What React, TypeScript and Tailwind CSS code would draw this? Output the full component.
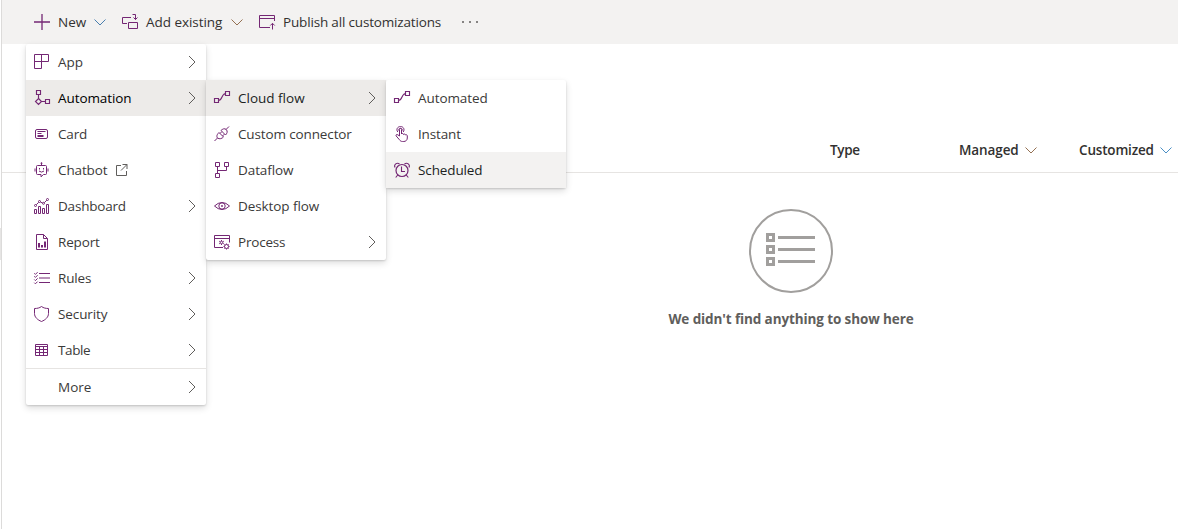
import React from 'react';

type IconName =
  | 'app' | 'automation' | 'card' | 'chatbot' | 'dashboard' | 'report' | 'rules' | 'security' | 'table'
  | 'flow' | 'connector' | 'dataflow' | 'desktop' | 'process' | 'instant' | 'clock'
  | 'plus' | 'addExisting' | 'publish';

const shapes: Record<IconName, React.ReactNode> = {
  app: <path d="M.5 14.5V.5h14v7H.5M7.5.5v14h-7" />,
  automation: <path d="M2.5.5h4v4h-4zM4.5 4.5v4M4.5 8.5l3 3-3 3-3-3zM7.5 11.5h4M11.5 9.5h4v4h-4z" strokeWidth="1.15" />,
  card: (
    <>
      <rect x="1.5" y="3.5" width="12" height="9" rx="1.5" />
      <path d="M3.5 5.500h8M3.5 7.500h4" />
      <path d="M3.5 10h6" strokeWidth="2" />
    </>
  ),
  chatbot: (
    <>
      <path d="M7.5 1v3M3.500 3.500h8a1 1 0 0 1 1 1v7a1 1 0 0 1-1 1H9.500l-2.500 2.300v-2.300H3.500a1 1 0 0 1-1-1v-7a1 1 0 0 1 1-1zM1 6.500v3M14 6.500v3" />
      <path d="M5 9q2.500 2.200 5 0M5.500 6v1.500M9.500 6v1.500" />
      <circle cx="7.500" cy="1.200" r=".6" />
    </>
  ),
  dashboard: (
    <>
      <path d="M.5 11.500h2v4h-2zM4.500 8.500h2v7h-2zM8.500 10.500h2v5h-2zM12.500 6.500h2v9h-2z" />
      <path d="M2.300 6.700l2.400-2.400M6.500 4l2 1M10.300 4.700l2.500-2.500" />
      <circle cx="1.500" cy="7.500" r="1" /><circle cx="5.500" cy="3.500" r="1" />
      <circle cx="9.500" cy="5.300" r="1" /><circle cx="13.500" cy="1.500" r="1" />
    </>
  ),
  report: (
    <>
      <path d="M9.500.5h-7v15h11v-11zM9.500.5v4h4" />
      <path d="M5 9v4.500M8 11v2.500M11 7.500v6" strokeWidth="2" />
    </>
  ),
  rules: (
    <>
      <path d="M5 3.500h11M5 8h11M5 12.500h11" strokeWidth="1.2" />
      <path d="M.3 3.300l1.100 1.100 2.200-2.200M.3 6.300l1.100 1.100 2.200-2.200M.3 9.500l1.100 1.100 2.200-2.200M.3 12.700l1.100 1.100 2.200-2.200" />
    </>
  ),
  security: <path d="M7.500.5C5.500 2 3.200 2.500.5 2.500v5c0 3.700 3.100 6.400 7 8 3.900-1.600 7-4.300 7-8v-5c-2.700 0-5-.5-7-2z" />,
  table: (
    <>
      <path d="M1.500 2.500h12v11h-12zM1.500 7.500h12M1.500 10.500h12M5.500 4.500v9M9.500 4.500v9" />
      <path d="M1.500 4.500h12" />
    </>
  ),
  flow: <path d="M.5 8.500h4v4h-4zM11.500 1.500h4v4h-4zM4.500 10.500c4 0 3-7 7-7" strokeWidth="1.15" />,
  connector: (
    <>
      <path d="M.5 15l3-3M12 3.500l3-3M3.500 12c-1.500-2 0-4 1.500-5.500l4.500 4.500C8 12.500 5.500 13.500 3.500 12zM7 4.500L11.500 9c1.500-1.500 2.500-3.500.8-5.500C10.500 2 8.500 3 7 4.500z" />
      <path d="M6 7.500l1.800-1.800M8.500 10l1.800-1.800" />
    </>
  ),
  dataflow: <path d="M1.500.5h4v4h-4zM10.500.5h4v4h-4zM1.500 11.500h4v4h-4zM3.500 4.500v7M3.500 8.500h9v-4" />,
  desktop: (
    <>
      <path d="M.5 8Q4 4.500 8 4.500T15.500 8Q12 11.500 8 11.500T.5 8z" />
      <circle cx="8" cy="8" r="3.200" /><circle cx="8" cy="8" r=".6" />
    </>
  ),
  process: (
    <>
      <path d="M9 13.500H.5v-12h15v7M.5 4.500h15" />
      <circle cx="7.500" cy="8.500" r="1.200" />
      <path d="M7.500 6v1M7.500 10v1M5.200 7.200l1 .6M8.800 9.200l1 .6M5.200 9.800l1-.6M8.800 7.800l1-.6" />
      <circle cx="12.500" cy="12.500" r="2" />
      <path d="M12.500 9.500v1M12.500 14.500v1M9.500 12.500h1M14.500 12.500h1M10.400 10.400l.7.7M13.900 13.900l.7.7M10.400 14.600l.7-.7M13.900 11.100l.7-.7" />
    </>
  ),
  instant: (
    <>
      <path d="M5.500 10V3.500c0-1.500 2-1.500 2 0V8c.3-.8 2-.7 2 .5.400-.8 2-.5 2 .5.400-.6 1.800-.3 1.800.8v2.200c0 2-1.500 3.500-3.500 3.500H8.500c-1.500 0-2.300-.7-3-1.700L2.200 10c-.7-1.200.6-2 1.600-1.200z" />
      <path d="M3.800 6C1.800 3.500 3.500.5 6.500.5S11 3.500 9.200 6" />
      <path d="M4.500 4.500c-.4-3 4.400-3 4 0" strokeWidth=".8" />
    </>
  ),
  clock: (
    <>
      <circle cx="8" cy="8.500" r="6" strokeWidth="1.2" />
      <path d="M7.500 4.500v5h3.500M3.700 13l-2 2.500M12.300 13l2 2.500M1 5.500C-.5 2.500 3 0 5.500 2M15 5.500C16.500 2.500 13 0 10.500 2" strokeWidth="1.1" />
    </>
  ),
  plus: <path d="M8 0v16M0 8h16" strokeWidth="1.3" />,
  addExisting: (
    <path d="M5 9.500H.5v-6H9M6.500 8.500h9v6h-9zM10.500.5h3v5M11.500 3.500l2 2 2-2" />
  ),
  publish: (
    <path d="M11 13.500H.5v-12h15V7M.5 4.500h15M13.500 15.500v-6M11.300 11.500l2.200-2.200 2.200 2.200" />
  ),
};

function Icon({ name, className = '' }: { name?: IconName; className?: string }) {
  return (
    <svg
      viewBox="0 0 16 16"
      fill="none"
      stroke="currentColor"
      className={`size-4 shrink-0 overflow-visible text-[#742774] ${className}`}
    >
      {name && shapes[name]}
    </svg>
  );
}

function ChevronDown({ className = '' }: { className?: string }) {
  return (
    <svg viewBox="0 0 12 7" fill="none" stroke="currentColor" className={`h-[7px] w-3 shrink-0 ${className}`}>
      <path d="M.5.5L6 6 11.500.5" />
    </svg>
  );
}

function ChevronRight() {
  return (
    <svg viewBox="0 0 8 14" fill="none" stroke="currentColor" className="mr-2.5 ml-auto h-3.5 w-2 shrink-0 text-[#605e5c]">
      <path d="M1 1l6 6-6 6" />
    </svg>
  );
}

interface Item {
  label: string;
  icon?: IconName;
  tracking?: string;
  sub?: boolean;
  external?: boolean;
  active?: string;
  divider?: boolean;
}

const mainItems: Item[] = [
  { label: 'App', icon: 'app', sub: true },
  { label: 'Automation', icon: 'automation', sub: true, active: 'bg-[#edebe9] text-black', tracking: 'tracking-[-0.08px]' },
  { label: 'Card', icon: 'card', tracking: 'tracking-[-0.15px]' },
  { label: 'Chatbot', icon: 'chatbot', external: true, tracking: 'tracking-[-0.12px]' },
  { label: 'Dashboard', icon: 'dashboard', sub: true, tracking: 'tracking-[-0.2px]' },
  { label: 'Report', icon: 'report', tracking: 'tracking-[-0.15px]' },
  { label: 'Rules', icon: 'rules', sub: true, tracking: 'tracking-[-0.15px]' },
  { label: 'Security', icon: 'security', sub: true, tracking: 'tracking-[-0.1px]' },
  { label: 'Table', icon: 'table', sub: true, tracking: 'tracking-[-0.4px]' },
  { label: 'More', sub: true, divider: true },
];

const automationItems: Item[] = [
  { label: 'Cloud flow', icon: 'flow', sub: true, active: 'bg-[#edebe9] text-[#201f1e]' },
  { label: 'Custom connector', icon: 'connector', tracking: 'tracking-[-0.13px]' },
  { label: 'Dataflow', icon: 'dataflow', tracking: 'tracking-[-0.08px]' },
  { label: 'Desktop flow', icon: 'desktop', tracking: 'tracking-[-0.08px]' },
  { label: 'Process', icon: 'process', sub: true, tracking: 'tracking-[-0.2px]' },
];

const flowItems: Item[] = [
  { label: 'Automated', icon: 'flow', tracking: 'tracking-[-0.08px]' },
  { label: 'Instant', icon: 'instant', tracking: 'tracking-[-0.15px]' },
  { label: 'Scheduled', icon: 'clock', active: 'bg-[#f3f2f1] text-[#201f1e]', tracking: 'tracking-[-0.12px]' },
];

function Menu({ items, className }: { items: Item[]; className: string }) {
  return (
    <ul className={`absolute w-[180px] rounded-xs bg-white shadow-[0_3px_7px_rgba(0,0,0,0.14),0_1px_2px_rgba(0,0,0,0.14)] ${className}`}>
      {items.map((item) => (
        <li key={item.label} className={item.divider ? 'border-t border-[#e6e4e2]' : ''}>
          <div className={`flex h-9 items-center pl-2 ${item.active ?? 'text-[#3b3a39]'}`}>
            <Icon name={item.icon} />
            <span className={`ml-2 whitespace-nowrap ${item.tracking ?? ''}`}>{item.label}</span>
            {item.external && (
              <svg viewBox="0 0 12 12" fill="none" stroke="currentColor" className="ml-[9px] size-3 text-[#605e5c]">
                <path d="M5 1.500H.5v10h10V7M6.500 .5h4.500V5M11 .5L5 6.500" />
              </svg>
            )}
            {item.sub && <ChevronRight />}
          </div>
        </li>
      ))}
    </ul>
  );
}

export default function App() {
  return (
    <div className="relative flex h-[529px] w-full overflow-hidden bg-white font-['Open_Sans','Noto_Sans',sans-serif] text-[13.5px] leading-5 text-[#323130]">
      <div className="flex w-0.5 shrink-0 flex-col justify-start border-r border-[#dcdbda] pt-[228px]">
        <div className="h-8 w-px bg-[#e6e5e4]" />
      </div>
      <main className="flex min-w-0 flex-1 flex-col">
        <header className="flex h-11 shrink-0 items-center bg-[#f3f2f1] pl-8">
          <Icon name="plus" />
          <span className="ml-2 w-7">New</span>
          <ChevronDown className="ml-2 text-[#4a7fae]" />
          <Icon name="addExisting" className="ml-4" />
          <span className="ml-2 w-[77px] whitespace-nowrap tracking-[-0.04px]">Add existing</span>
          <ChevronDown className="ml-2 text-[#947052]" />
          <Icon name="publish" className="ml-4" />
          <span className="ml-2 w-[159px] whitespace-nowrap tracking-[-0.17px]">Publish all customizations</span>
          <svg viewBox="0 0 16 2" fill="currentColor" className="ml-5 h-0.5 w-4 text-[#605e5c]">
            <circle cx="1" cy="1" r="1" /><circle cx="8" cy="1" r="1" /><circle cx="15" cy="1" r="1" />
          </svg>
        </header>
        <div className="mt-[84px] flex h-[45px] shrink-0 items-center border-b border-[#e6e4e2] pl-[828px] font-semibold">
          <span className="w-[129px] tracking-[-0.3px]">Type</span>
          <div className="flex w-[120px] items-center">
            <span className="w-[60px] tracking-[-0.1px]">Managed</span>
            <ChevronDown className="ml-[6px] text-[#947052]" />
          </div>
          <div className="flex items-center">
            <span className="w-[75px] tracking-[-0.18px]">Customized</span>
            <ChevronDown className="ml-[6px] text-[#4a8fc5]" />
          </div>
        </div>
        <section className="ml-[402px] flex flex-col items-center pt-9">
          <svg viewBox="0 0 84 84" fill="none" stroke="#a19f9d" className="size-[84px]">
            <circle cx="42" cy="42" r="41" strokeWidth="2" />
            <path d="M29 28.500h37M29 40.500h37M29 52.500h37" strokeWidth="3" />
            <path d="M18.500 25.500h6v6h-6zM18.500 37.500h6v6h-6zM18.500 49.500h6v6h-6z" strokeWidth="3" />
          </svg>
          <p className="mt-4 font-bold tracking-[-0.11px] text-[#605e5c]">We didn't find anything to show here</p>
        </section>
      </main>
      <Menu items={mainItems} className="top-11 left-[26px]" />
      <Menu items={automationItems} className="top-20 left-[206px]" />
      <Menu items={flowItems} className="top-20 left-[386px]" />
    </div>
  );
}
